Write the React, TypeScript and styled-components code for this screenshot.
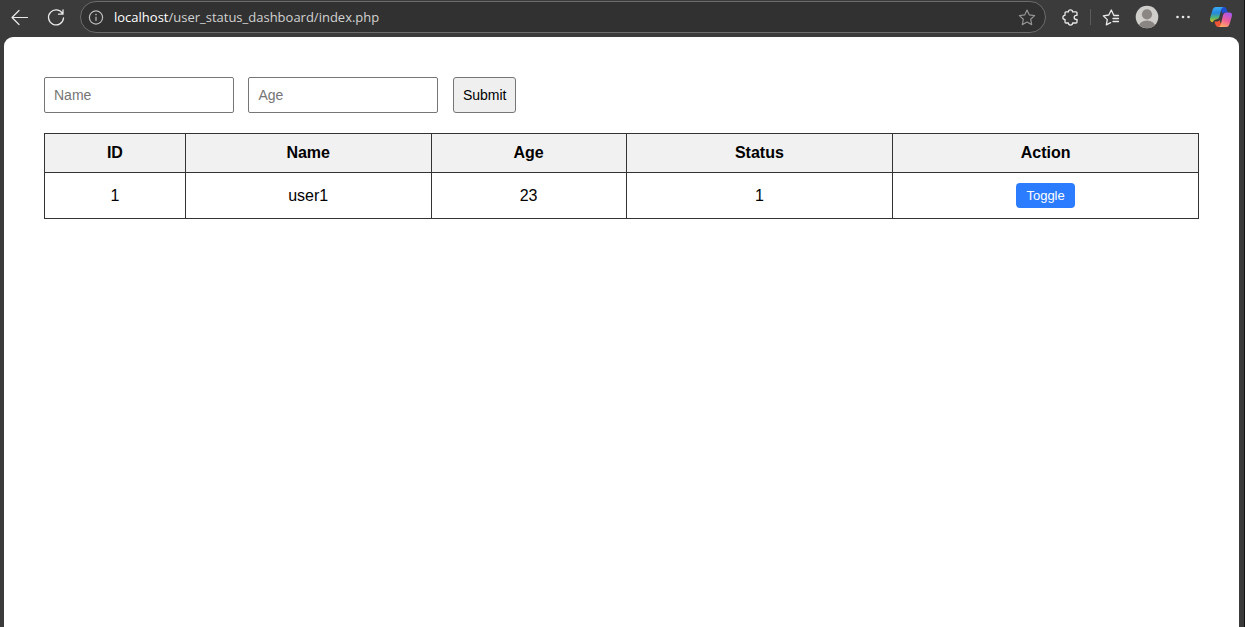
import React, { useState } from "react";
import styled, { createGlobalStyle } from "styled-components";

const GlobalStyle = createGlobalStyle`
  * { box-sizing: border-box; }
  body {
    margin: 0;
    background: #3b3b3b;
    font-family: "Liberation Sans", Arial, sans-serif;
    color: #000;
  }
`;

const Browser = styled.div`
  display: flex;
  flex-direction: column;
  min-height: 100vh;
  background: #3b3b3b;
  border-right: 1px solid #111;
`;

const Toolbar = styled.header`
  display: flex;
  align-items: center;
  height: 37px;
  padding: 0 11px 3px 8px;
`;

const IconButton = styled.button<{ $gap?: number; $color?: string }>`
  display: flex;
  align-items: center;
  justify-content: center;
  width: 24px;
  height: 24px;
  flex: none;
  margin: 0 0 0 ${(p) => p.$gap ?? 0}px;
  padding: 0;
  border: 0;
  background: none;
  color: ${(p) => p.$color ?? "#e9e9e9"};
`;

const AddressBar = styled.div`
  display: flex;
  align-items: center;
  flex: 1;
  min-width: 0;
  height: 32px;
  margin-left: 12px;
  padding: 0 6px 0 3px;
  border: 1px solid #6c6c6c;
  border-radius: 16px;
  background: #313131;
`;

const Url = styled.div`
  flex: 1;
  padding-left: 6px;
  overflow: hidden;
  white-space: nowrap;
  font: 13px/20px "Open Sans", "Noto Sans", sans-serif;
  color: #d2d2d2;

  strong {
    font-weight: 400;
    color: #fff;
  }
`;

const Divider = styled.span`
  width: 1px;
  height: 16px;
  margin-left: 8px;
  background: #5c5c5c;
`;

const Page = styled.main`
  flex: 1;
  margin: 0 5px 0 4px;
  padding: 40px;
  border-radius: 9px 9px 0 0;
  background: #fff;
`;

const UserForm = styled.form`
  margin-bottom: 20px;
  font-size: 16px;
`;

const TextField = styled.input`
  width: 190px;
  height: 36px;
  margin: 0 10px 0 0;
  padding: 8px 9px;
  border: 1px solid #767676;
  border-radius: 2px;
  background: #fff;
  font: 14px "Liberation Sans", Arial, sans-serif;
  vertical-align: top;

  &::placeholder { color: #757575; }
`;

const SubmitButton = styled.button`
  height: 36px;
  margin: 0;
  padding: 8px 9px;
  border: 1px solid #767676;
  border-radius: 3px;
  background: #efefef;
  color: #000;
  font: 14px "Liberation Sans", Arial, sans-serif;
  vertical-align: top;
`;

const UserTable = styled.table`
  width: 100%;
  border-collapse: collapse;
  table-layout: fixed;
  font-size: 16px;
  line-height: 18px;

  th, td {
    padding: 10px;
    border: 1px solid #333;
    text-align: center;
  }

  th { background: #f1f1f1; }
`;

const Column = styled.col<{ $share: number }>`
  width: ${(p) => p.$share}%;
`;

const ToggleButton = styled.button`
  display: inline-block;
  min-width: 59px;
  padding: 5px 10px;
  border: 0;
  border-radius: 4px;
  background: #2b7cff;
  color: #fff;
  font: 13px/15px "Liberation Sans", Arial, sans-serif;
  vertical-align: top;
  cursor: pointer;
`;

const DataCell = styled.td`
  line-height: 25px;
`;

const line = {
  fill: "none",
  stroke: "currentColor",
  strokeLinecap: "round" as const,
  strokeLinejoin: "round" as const,
};

const BackIcon = () => (
  <svg width="24" height="24" viewBox="0 0 24 24" {...line} strokeWidth="1.2">
    <path d="M19.5 12.5H4.5M11 5.5l-7 7 7 7" />
  </svg>
);

const RefreshIcon = () => (
  <svg width="24" height="24" viewBox="0 0 24 24" {...line} strokeWidth="1.3">
    <path d="M18.6 8.8A7.5 7.5 0 1 0 19.5 13M19 4.8v4.4h-4.5" />
  </svg>
);

const InfoIcon = () => (
  <svg width="24" height="24" viewBox="0 0 24 24" {...line} strokeWidth="1.2">
    <circle cx="12" cy="12.5" r="6.6" />
    <path d="M12 12v3.5" />
    <circle cx="12" cy="9.6" r=".8" fill="currentColor" stroke="none" />
  </svg>
);

const StarIcon = () => (
  <svg width="24" height="24" viewBox="0 0 24 24" {...line} strokeWidth="1.2">
    <path d="M12 5l2.3 4.9 5.3.7-3.9 3.7 1 5.3-4.7-2.6-4.7 2.6 1-5.3-3.9-3.7 5.3-.7z" />
  </svg>
);

const ExtensionIcon = () => (
  <svg width="24" height="24" viewBox="0 0 24 24" {...line} strokeWidth="1.3">
    <path d="M8 6.9h2.4a2.1 2.1 0 0 1 4.2 0H18q1 0 1 1v2.4h-.7a2.1 2.1 0 0 0 0 4.2h.7V17q0 1-1 1h-3.4a2.1 2.1 0 0 1-4.2 0H8q-1 0-1-1v-2.5a2.1 2.1 0 0 1 0-4.2V7.9q0-1 1-1" />
  </svg>
);

const FavoritesIcon = () => (
  <svg width="24" height="24" viewBox="0 0 24 24" {...line} strokeWidth="1.3">
    <path d="M19.5 10.5h-4.6L12.3 5 9.8 10l-5.5.8 4 3.8-1 5.3 4.3-2.3M14 13.5h5.5M14 16.5h5.5" />
  </svg>
);

const ProfileIcon = () => (
  <svg width="24" height="24" viewBox="0 0 24 24">
    <defs>
      <clipPath id="avatar"><circle cx="12" cy="12" r="11.3" /></clipPath>
    </defs>
    <circle cx="12" cy="12" r="11.3" fill="#d0cecb" />
    <g clipPath="url(#avatar)" fill="#8a8683">
      <circle cx="12" cy="9.3" r="5.1" />
      <ellipse cx="12" cy="21.5" rx="8.2" ry="6" />
    </g>
  </svg>
);

const MoreIcon = () => (
  <svg width="24" height="24" viewBox="0 0 24 24" fill="currentColor">
    <circle cx="6.5" cy="12" r="1.3" />
    <circle cx="12" cy="12" r="1.3" />
    <circle cx="17.5" cy="12" r="1.3" />
  </svg>
);

const CopilotIcon = () => (
  <svg width="24" height="24" viewBox="0 0 24 24">
    <defs>
      <linearGradient id="cool" x1="0" y1="0" x2="0" y2="1">
        <stop offset="0" stopColor="#39aaf2" />
        <stop offset=".4" stopColor="#2589de" />
        <stop offset=".72" stopColor="#58b66b" />
        <stop offset="1" stopColor="#edc51c" />
      </linearGradient>
      <linearGradient id="warm" x1=".7" y1="0" x2=".3" y2="1">
        <stop offset="0" stopColor="#a957ed" />
        <stop offset=".5" stopColor="#ed5d9a" />
        <stop offset="1" stopColor="#ffab62" />
      </linearGradient>
    </defs>
    <path d="M11 2h4q2 0 2.6 2l1.2 3.6h-3q-1.6 0-2.2 1.4z" fill="#1f4fd0" />
    <path d="M13 22H9.2q-2 0-2.6-2l-1.2-3.6h3q1.6 0 2.2-1.4z" fill="#ee5637" />
    <path d="M6.6 2h8.2q-2 .4-2.6 2.6L10.3 12q-.5 1.4-1.9 2-4 1-4.8 3.2Q.2 16.6 1.2 12.8L3.6 4.5Q4.4 2 6.6 2z" fill="url(#cool)" />
    <path d="M17.4 22H9.2q2-.4 2.6-2.6L13.9 10.5Q14.6 7.6 17.4 7.6h3q3.4 0 2.4 3.8l-2.4 8.1q-.8 2.5-3 2.5z" fill="url(#warm)" />
  </svg>
);

interface User {
  id: number;
  name: string;
  age: number;
  status: number;
}

export default function App() {
  const [users, setUsers] = useState<User[]>([
    { id: 1, name: "user1", age: 23, status: 1 },
  ]);

  const toggle = (id: number) =>
    setUsers(users.map((u) => (u.id === id ? { ...u, status: 1 - u.status } : u)));

  return (
    <Browser>
      <GlobalStyle />
      <Toolbar>
        <IconButton aria-label="Back"><BackIcon /></IconButton>
        <IconButton aria-label="Refresh" $gap={12}><RefreshIcon /></IconButton>
        <AddressBar>
          <IconButton aria-label="Site information" $color="#bdbdbd"><InfoIcon /></IconButton>
          <Url><strong>localhost</strong>/user_status_dashboard/index.php</Url>
          <IconButton aria-label="Add to favorites" $color="#949494"><StarIcon /></IconButton>
        </AddressBar>
        <IconButton aria-label="Extensions" $gap={12}><ExtensionIcon /></IconButton>
        <Divider />
        <IconButton aria-label="Favorites" $gap={8}><FavoritesIcon /></IconButton>
        <IconButton aria-label="Profile" $gap={12}><ProfileIcon /></IconButton>
        <IconButton aria-label="More" $gap={12}><MoreIcon /></IconButton>
        <IconButton aria-label="Copilot" $gap={14}><CopilotIcon /></IconButton>
      </Toolbar>
      <Page>
        <UserForm onSubmit={(e) => e.preventDefault()}>
          <TextField type="text" aria-label="Name" placeholder="Name" />{" "}
          <TextField type="text" aria-label="Age" placeholder="Age" />{" "}
          <SubmitButton type="submit">Submit</SubmitButton>
        </UserForm>
        <UserTable>
          <colgroup>
            <Column $share={12.2} />
            <Column $share={21.3} />
            <Column $share={16.9} />
            <Column $share={23.1} />
            <Column $share={26.5} />
          </colgroup>
          <thead>
            <tr>
              <th>ID</th>
              <th>Name</th>
              <th>Age</th>
              <th>Status</th>
              <th>Action</th>
            </tr>
          </thead>
          <tbody>
            {users.map((user) => (
              <tr key={user.id}>
                <DataCell>{user.id}</DataCell>
                <DataCell>{user.name}</DataCell>
                <DataCell>{user.age}</DataCell>
                <DataCell>{user.status}</DataCell>
                <DataCell>
                  <ToggleButton type="button" onClick={() => toggle(user.id)}>Toggle</ToggleButton>
                </DataCell>
              </tr>
            ))}
          </tbody>
        </UserTable>
      </Page>
    </Browser>
  );
}
